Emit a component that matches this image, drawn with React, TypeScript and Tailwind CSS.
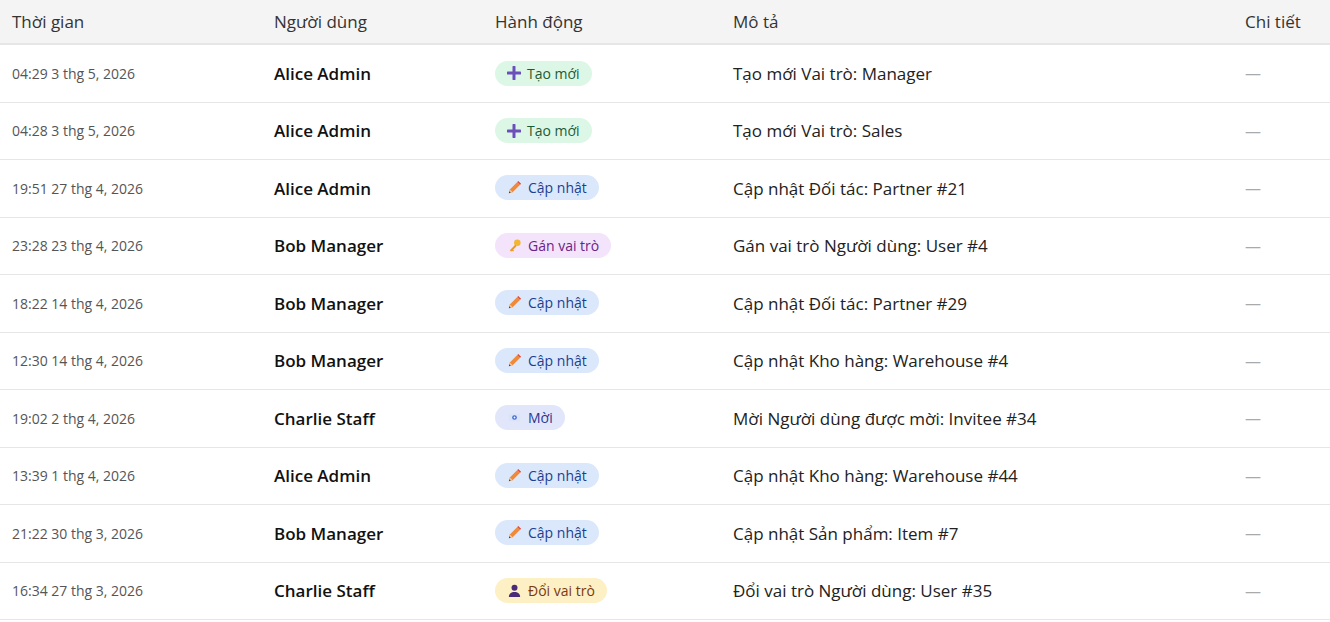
import React from "react";

const Plus = () => (<svg width="14" height="14" viewBox="0 0 14 14"><path d="M7 1v12M1 7h12" stroke="#6b4fbb" strokeWidth="3" strokeLinecap="round"/></svg>);
const Pencil = () => (<svg width="15" height="15" viewBox="0 0 16 16"><path d="M2 14l1-4 8-8 3 3-8 8z" fill="#f08a3a"/><path d="M11 2l3 3 1-1-3-3z" fill="#e0443b"/><path d="M2 14l1-4 3 3z" fill="#f4c9a0"/><path d="M2 14l.6-2 1.4 1.4z" fill="#333"/></svg>);
const Key = () => (<svg width="15" height="15" viewBox="0 0 16 16"><circle cx="11" cy="5" r="3.5" fill="#f2b632"/><path d="M9 7l-6 6 1.5 1.5 1-1 1 1 1-1-1-1 3.5-3.5z" fill="#e89c1e"/></svg>);
const Invite = () => (<svg width="15" height="15" viewBox="0 0 16 16"><rect x="2" y="4" width="12" height="8" rx="1" fill="#dbe3f7"/><circle cx="8" cy="8" r="2.5" fill="#3e6bd6"/><circle cx="8" cy="8" r="1" fill="#fff"/></svg>);
const User = () => (<svg width="15" height="15" viewBox="0 0 16 16"><circle cx="8" cy="5" r="3.2" fill="#4b2a7a"/><path d="M2 15c0-4 2.5-5.5 6-5.5s6 1.5 6 5.5z" fill="#4b2a7a"/></svg>);

type Kind = "create" | "update" | "assign" | "invite" | "role";
const badge: Record<Kind, { label: string; cls: string; icon: React.ReactNode }> = {
  create: { label: "Tạo mới", cls: "bg-[#dcf7e6] text-[#1e5a34]", icon: <Plus /> },
  update: { label: "Cập nhật", cls: "bg-[#dbe8fb] text-[#1d3f8f]", icon: <Pencil /> },
  assign: { label: "Gán vai trò", cls: "bg-[#f3e3fb] text-[#6a2387]", icon: <Key /> },
  invite: { label: "Mời", cls: "bg-[#e1e6fb] text-[#2b3590]", icon: <Invite /> },
  role: { label: "Đổi vai trò", cls: "bg-[#fdf0c4] text-[#7a3a10]", icon: <User /> },
};

const rows: [string, string, Kind, string][] = [
  ["04:29 3 thg 5, 2026", "Alice Admin", "create", "Tạo mới Vai trò: Manager"],
  ["04:28 3 thg 5, 2026", "Alice Admin", "create", "Tạo mới Vai trò: Sales"],
  ["19:51 27 thg 4, 2026", "Alice Admin", "update", "Cập nhật Đối tác: Partner #21"],
  ["23:28 23 thg 4, 2026", "Bob Manager", "assign", "Gán vai trò Người dùng: User #4"],
  ["18:22 14 thg 4, 2026", "Bob Manager", "update", "Cập nhật Đối tác: Partner #29"],
  ["12:30 14 thg 4, 2026", "Bob Manager", "update", "Cập nhật Kho hàng: Warehouse #4"],
  ["19:02 2 thg 4, 2026", "Charlie Staff", "invite", "Mời Người dùng được mời: Invitee #34"],
  ["13:39 1 thg 4, 2026", "Alice Admin", "update", "Cập nhật Kho hàng: Warehouse #44"],
  ["21:22 30 thg 3, 2026", "Bob Manager", "update", "Cập nhật Sản phẩm: Item #7"],
  ["16:34 27 thg 3, 2026", "Charlie Staff", "role", "Đổi vai trò Người dùng: User #35"],
];

export default function App() {
  return (
    <div className="w-[1330px] bg-white text-[#222]" style={{ fontFamily: "'Open Sans', 'Noto Sans', sans-serif" }}>
      <div className="grid grid-cols-[262px_221px_238px_512px_1fr] h-[45px] items-center bg-[#f4f4f4] border-b-2 border-[#e6e6e6] text-[17px] text-[#333]">
        <div className="pl-3">Thời gian</div>
        <div className="pl-3">Người dùng</div>
        <div className="pl-3">Hành động</div>
        <div className="pl-3">Mô tả</div>
        <div className="pl-3">Chi tiết</div>
      </div>
      {rows.map(([t, u, k, d], i) => {
        const b = badge[k];
        return (
          <div key={i} className="grid grid-cols-[262px_221px_238px_512px_1fr] h-[57.5px] items-center border-b border-[#e6e6e6]">
            <div className="pl-3 text-[14px] text-[#555]">{t}</div>
            <div className="pl-3 text-[17px] font-semibold text-[#111]">{u}</div>
            <div className="pl-3">
              <span className={"inline-flex items-center gap-[6px] rounded-full px-3 h-[25px] text-[14px] font-medium " + b.cls}>
                {b.icon}{b.label}
              </span>
            </div>
            <div className="pl-3 text-[17px] text-[#222]">{d}</div>
            <div className="pl-3 text-[#aaa]">—</div>
          </div>
        );
      })}
    </div>
  );
}
